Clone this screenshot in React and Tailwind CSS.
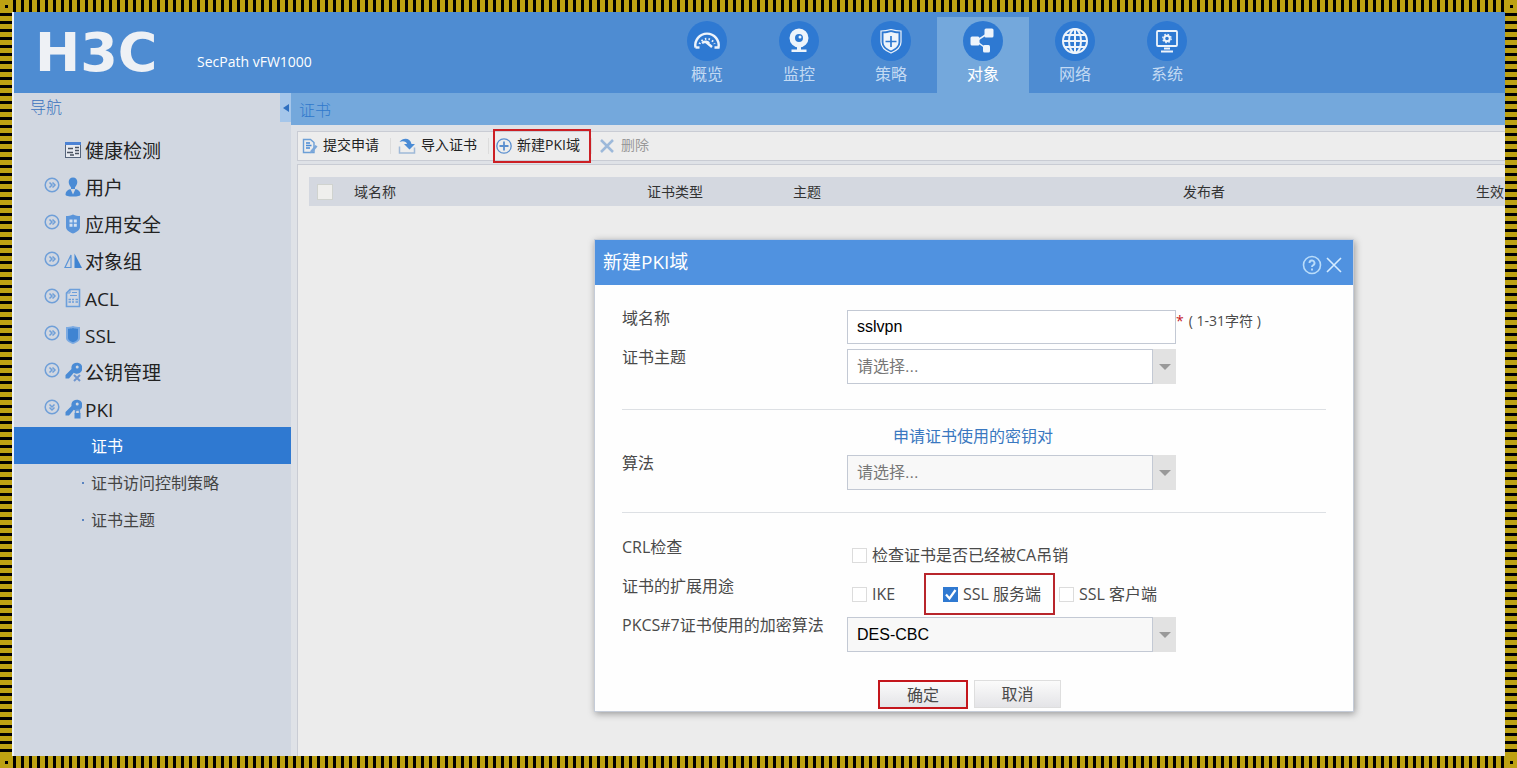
import { useState } from "react";

const GaugeIcon = () => (
  <svg viewBox="0 0 28 28" className="h-7 w-7" fill="none" stroke="#eef4fb">
    <path d="M2.500 20.500a11.700 11.700 0 1 1 23 0h-4" strokeWidth="2.400" />
    <path d="M2.500 20.500h4" strokeWidth="2.400" />
    <path d="M6.500 17a8 8 0 0 1 15 0" strokeWidth="2" strokeDasharray="1.500 2.200" />
    <path d="M9 16c3-2 6-1.500 7 .5M13 15l6 5" strokeWidth="2.400" />
  </svg>
);

const CameraIcon = () => (
  <svg viewBox="0 0 28 28" className="h-7 w-7" fill="#eef4fb">
    <path
      fillRule="evenodd"
      d="M14 1.500a9.500 9.500 0 1 0 0 19 9.500 9.500 0 0 0 0-19zm0 5.500a4 4 0 1 1 0 8 4 4 0 0 1 0-8z"
    />
    <circle cx="15" cy="10" r="1.500" />
    <path d="M12 19h4v3.500h5.500V25h-15v-2.500H12z" />
  </svg>
);

const PolicyIcon = () => (
  <svg viewBox="0 0 28 28" className="h-7 w-7" fill="none" stroke="#eef4fb">
    <path
      d="M14 2.500c3.500 1 6.500 1.500 10 1.500v11c0 5-4 8.500-10 11-6-2.500-10-6-10-11V4c3.500 0 6.500-.5 10-1.500z"
      strokeWidth="1.200"
    />
    <path
      d="M14 5c3 .8 5 1.200 7.500 1.300V15c0 3.800-3 6.500-7.500 8.500C9.500 21.500 6.500 18.800 6.500 15V6.300C9 6.200 11 5.800 14 5z"
      fill="#eef4fb"
      stroke="none"
    />
    <path d="M14 9v11M8.500 14.500h11" stroke="#2e79d2" strokeWidth="1.700" />
  </svg>
);

const ObjectIcon = () => (
  <svg viewBox="0 0 28 28" className="h-7 w-7" fill="#eef4fb">
    <path d="M18 7l-11 7 11 8" fill="none" stroke="#eef4fb" strokeWidth="1.500" />
    <rect x="15.500" y="1.500" width="9" height="9" rx="1.500" />
    <rect x="1.500" y="9.500" width="9" height="9" rx="1.500" />
    <rect x="14" y="18" width="7" height="7.500" rx="1.500" />
  </svg>
);

const GlobeIcon = () => (
  <svg viewBox="0 0 28 28" className="h-7 w-7" fill="none" stroke="#eef4fb" strokeWidth="2">
    <circle cx="14" cy="14" r="12" />
    <ellipse cx="14" cy="14" rx="6" ry="12" />
    <path d="M14 2v24M2 14h24M4 8h20M4 20h20" />
  </svg>
);

const SystemIcon = () => (
  <svg viewBox="0 0 28 28" className="h-7 w-7" fill="none" stroke="#eef4fb">
    <rect x="4" y="4" width="20" height="15" rx="1" strokeWidth="1.800" />
    <circle cx="14" cy="11.500" r="2.800" strokeWidth="2" />
    <circle cx="14" cy="11.500" r="4.200" strokeWidth="1.300" strokeDasharray="1.600 1.700" />
    <path d="M11 21.500h6M8 24.500h12" strokeWidth="2" />
  </svg>
);

const HealthIcon = () => (
  <svg viewBox="0 0 18 18" className="h-[18px] w-[18px]">
    <rect x="1.500" y="1.500" width="15" height="15" fill="#e7eaf0" stroke="#56657c" />
    <rect x="1" y="1" width="16" height="3" fill="#4c82d4" />
    <path d="M4 7.500h5M3 11.500h6M6 14h4M11 6.500h4M11 9.500h4M11 12.500h4" stroke="#48515f" strokeWidth="1.400" />
  </svg>
);

const UserIcon = () => (
  <svg viewBox="0 0 18 20" className="h-5 w-[18px]" fill="#4a8bd5">
    <path d="M9 .5c2.700 0 4.300 2 4.300 4.500 0 2.300-1.200 4-2.300 5.200V12H7v-1.800C5.900 9 4.700 7.300 4.700 5 4.700 2.500 6.300.5 9 .5z" />
    <path d="M6.500 12L9 17.500l2.500-5.500c3 .8 5 2.500 5 5.500 0 1.500-3 2-7.500 2s-7.500-.5-7.500-2c0-3 2-4.700 5-5.500z" />
  </svg>
);

const AppShieldIcon = () => (
  <svg viewBox="0 0 18 20" className="h-5 w-[18px]">
    <path d="M9 .5c2.500 1 4.500 1.500 7 1.500v11c0 3-3 5-7 6.500C5 18 2 16 2 13V2c2.500 0 4.500-.5 7-1.500z" fill="#5b95da" />
    <path d="M5.500 5.500h3v3h-3zM9.800 5.500h3v3h-3zM5.500 9.800h3v3h-3zM9.800 9.800h3v3h-3z" fill="#d5e2f2" />
  </svg>
);

const MirrorIcon = () => (
  <svg viewBox="0 0 18 18" className="h-[18px] w-[18px]">
    <path d="M7 3v12.500H1z" fill="none" stroke="#5b95d8" strokeWidth="1.200" />
    <path d="M10.500 1.500L18 16h-7.500z" fill="#3f84d2" />
  </svg>
);

const AclIcon = () => (
  <svg viewBox="0 0 18 20" className="h-5 w-[18px]" fill="none" stroke="#6c9fdb">
    <path d="M6 1.500h9.500v17h-13V5z" strokeWidth="1.600" />
    <path d="M6 1.500V5H2.500M8 4.500h5M6 7.500h7" />
    <path d="M4.500 11.500h2.500M8 11.500h2M11.500 11.500h2.500M4.500 14h2.500M8 14h2M11.500 14h2.500" strokeWidth="1.600" />
  </svg>
);

const SslIcon = () => (
  <svg viewBox="0 0 18 20" className="h-5 w-[18px]">
    <path d="M9 1c2.500.8 4.500 1 7 1v11c0 3-3 4.500-7 6-4-1.500-7-3-7-6V2c2.500 0 4.500-.2 7-1z" fill="#7baae2" />
    <path d="M9 3c2 .6 3.500.8 5 .8V13c0 2-2 3.300-5 4.300C6 16.300 4 15 4 13V3.800c1.500 0 3-.2 5-.8z" fill="#3f84d2" />
  </svg>
);

const KeyShape = () => (
  <path
    fillRule="evenodd"
    d="M11 1a5.500 5.500 0 1 1-1.200 9.700L5 16.500H1.500V13l6-6A5.500 5.500 0 0 1 11 1zm2.200 2.500a1.500 1.500 0 1 0 0 3 1.500 1.500 0 0 0 0-3z"
    fill="#4a8bd5"
  />
);

const KeyIcon = () => (
  <svg viewBox="0 0 18 20" className="h-5 w-[18px]">
    <KeyShape />
    <path d="M10 13l6 6M16 13l-6 6" stroke="#6f96cf" strokeWidth="2" />
  </svg>
);

const PkiIcon = () => (
  <svg viewBox="0 0 18 20" className="h-5 w-[18px]">
    <KeyShape />
    <path d="M11.500 14.500v-2a2 2 0 0 1 4 0v2" fill="none" stroke="#5b95d8" strokeWidth="1.400" />
    <rect x="10.500" y="14" width="6" height="5.500" fill="#4a8bd5" />
  </svg>
);

const ExpandIcon = ({ open }) => (
  <svg viewBox="0 0 16 16" className="h-4 w-4" fill="none" stroke="#6f9fd8">
    <circle cx="8" cy="8" r="6.800" strokeWidth="1.500" />
    {open ? (
      <path d="M5.500 5.500L8 8l2.500-2.500M5.500 8.500L8 11l2.500-2.500" strokeWidth="1.500" />
    ) : (
      <path d="M5.500 5.500L8 8l-2.500 2.500M8.500 5.500L11 8l-2.500 2.500" strokeWidth="1.500" />
    )}
  </svg>
);

const SubmitIcon = () => (
  <svg viewBox="0 0 16 16" className="h-4 w-4" fill="none">
    <path d="M1.500 1.500h7l3.500 3v10H1.500z" stroke="#6c9fd6" strokeWidth="1.400" />
    <path d="M4 5h4M4 7.500h5.500M4 10h4" stroke="#4a8bd5" strokeWidth="1.400" />
    <path d="M13.500 7l2 1.500-5 6-2.500.8.500-2.500z" fill="#7ba7da" />
  </svg>
);

const ImportIcon = () => (
  <svg viewBox="0 0 18 16" className="h-4 w-[18px]">
    <path d="M1.500 4C5-.5 12-.5 13.500 6H17l-5.500 5.500L6 6h3C8.500 3.500 5 2.500 1.500 4z" fill="#4a8bd5" />
    <path d="M1.500 8.500V15h15V9.500" fill="none" stroke="#9fb9d8" strokeWidth="1.500" />
  </svg>
);

const AddIcon = () => (
  <svg viewBox="0 0 16 16" className="h-4 w-4" fill="none" stroke="#5b8fcf">
    <circle cx="8" cy="8" r="7.200" strokeWidth="1.300" />
    <path d="M8 3.500v9M3.500 8h9" strokeWidth="1.800" />
  </svg>
);

const DeleteIcon = () => (
  <svg viewBox="0 0 16 16" className="h-4 w-4" fill="none" stroke="#9db9da" strokeWidth="2.500">
    <path d="M2 2l12 12M14 2L2 14" />
  </svg>
);

const menus = [
  { name: "概览", icon: GaugeIcon },
  { name: "监控", icon: CameraIcon },
  { name: "策略", icon: PolicyIcon },
  { name: "对象", icon: ObjectIcon, active: true },
  { name: "网络", icon: GlobeIcon },
  { name: "系统", icon: SystemIcon },
];

const navItems = [
  { name: "健康检测", icon: HealthIcon, leaf: true },
  { name: "用户", icon: UserIcon },
  { name: "应用安全", icon: AppShieldIcon },
  { name: "对象组", icon: MirrorIcon },
  { name: "ACL", icon: AclIcon },
  { name: "SSL", icon: SslIcon },
  { name: "公钥管理", icon: KeyIcon },
  { name: "PKI", icon: PkiIcon, open: true },
];

const pkiItems = ["证书", "证书访问控制策略", "证书主题"];

const Corner = () => (
  <div className="flex h-3 w-3 items-center justify-center">
    <span className="h-[3px] w-[3px] bg-black" />
  </div>
);

const StripeRow = () => (
  <div className="flex h-3 shrink-0 bg-[#bda112]">
    <Corner />
    <div className="flex-1 bg-[repeating-linear-gradient(90deg,#bda112_0px,#bda112_1px,#000_1px,#000_4px,#bda112_4px,#bda112_8px)]" />
    <Corner />
  </div>
);

const StripeColumn = () => (
  <div className="w-3 shrink-0 bg-[repeating-linear-gradient(180deg,#bda112_0px,#bda112_1px,#000_1px,#000_4px,#bda112_4px,#bda112_8px)]" />
);

const Header = () => (
  <header className="flex h-[81px] shrink-0 bg-[#4e8cd2] text-white">
    <div className="flex w-[647px] shrink-0 pl-[21px]">
      <span className="w-[162px] pt-[11px] font-['DejaVu_Sans'] text-[54px] leading-[60px] font-bold text-[#eef1f5]">
        H3C
      </span>
      <span className="pt-10 text-sm">SecPath vFW1000</span>
    </div>
    <nav className="flex pt-[5px]">
      {menus.map(({ name, icon: Icon, active }) => (
        <a
          key={name}
          href="#"
          className={`flex w-[92px] flex-col items-center pt-1 ${
            active ? "bg-[#74a8dc] text-white" : "text-[#c3daf3]"
          }`}
        >
          <span className="flex h-10 w-10 items-center justify-center rounded-full bg-[#2e79d2]">
            <Icon />
          </span>
          <span className="text-base leading-[26px]">{name}</span>
        </a>
      ))}
    </nav>
  </header>
);

const Sidebar = () => (
  <aside className="w-[277px] shrink-0 bg-[#d1d7e1]">
    <div className="flex h-[38px] justify-between">
      <h2 className="pt-0.5 pl-4 text-base font-light text-[#3a72bd]">导航</h2>
      <button
        type="button"
        aria-label="收起导航"
        className="flex h-[29px] w-[11px] items-center justify-center bg-[#a5c6ea]"
      >
        <svg viewBox="0 0 6 8" className="h-2 w-1.5" fill="#2e6fc0">
          <path d="M6 0v8L0 4z" />
        </svg>
      </button>
    </div>
    <ul>
      {navItems.map(({ name, icon: Icon, open, leaf }) => (
        <li key={name}>
          <a href="#" className="flex h-[37px] items-center pl-[30px] text-[#222]">
            <span className="w-5 pb-1">{!leaf && <ExpandIcon open={open} />}</span>
            <Icon />
            <span className="pt-0.5 pl-[3px] text-[19px] leading-8">{name}</span>
          </a>
        </li>
      ))}
    </ul>
    <ul>
      {pkiItems.map((name, index) => (
        <li key={name}>
          <a
            href="#"
            className={`flex h-[37px] items-center pl-[68px] text-base ${
              index === 0 ? "bg-[#2f79d1] text-white" : "text-[#444]"
            }`}
          >
            <span className="flex w-[9px]">
              {index > 0 && <i className="h-0.5 w-0.5 bg-[#5a84c0]" />}
            </span>
            {name}
          </a>
        </li>
      ))}
    </ul>
  </aside>
);

const Separator = () => <span className="mr-[7px] ml-[11px] h-4 w-px bg-[#dcdcdc]" />;

const Toolbar = ({ onCreate }) => (
  <div className="mt-1.5 ml-1.5 flex h-[30px] items-center border-y border-l border-[#c9ccd4] bg-[#ededed] pl-1 text-sm text-[#222]">
    <button type="button" className="flex items-center gap-[5px]">
      <SubmitIcon />
      <span className="pb-0.5">提交申请</span>
    </button>
    <Separator />
    <button type="button" className="flex items-center gap-[5px]">
      <ImportIcon />
      <span className="pb-0.5">导入证书</span>
    </button>
    <Separator />
    <button type="button" className="relative flex items-center gap-[5px]" onClick={onCreate}>
      <AddIcon />
      <span className="pb-0.5">新建PKI域</span>
      <span className="absolute -inset-y-1.5 -right-[11px] -left-[3px] border-2 border-[#cc1f24]" />
    </button>
    <Separator />
    <button type="button" className="flex items-center gap-1.5 text-[#999]">
      <DeleteIcon />
      <span className="pb-0.5">删除</span>
    </button>
  </div>
);

const CertTable = () => (
  <div className="mt-[3px] ml-1.5 flex-1 overflow-hidden border-t border-l border-[#c9ccd4] bg-[#ececec] pt-3 pl-[11px]">
    <table className="w-[1320px] table-fixed text-left text-sm text-[#333]">
      <thead>
        <tr className="h-[29px] bg-[#d4d8e0]">
          <th className="w-[45px] pl-2">
            <input
              type="checkbox"
              aria-label="全选"
              className="block h-4 w-4 appearance-none border border-[#d0d3cf] bg-[#efefed]"
            />
          </th>
          <th className="w-[293px] font-normal">域名称</th>
          <th className="w-[146px] font-normal">证书类型</th>
          <th className="w-[390px] font-normal">主题</th>
          <th className="w-[293px] font-normal">发布者</th>
          <th className="font-normal">生效日期</th>
        </tr>
      </thead>
    </table>
  </div>
);

const Row = ({ label, htmlFor, children }) => (
  <div className="flex min-h-[39px]">
    <label htmlFor={htmlFor} className="w-[225px] shrink-0 leading-6">
      {label}
    </label>
    {children}
  </div>
);

const Select = ({ id, options, className }) => (
  <div className="relative mt-1 h-[35px] w-[329px]">
    <select
      id={id}
      className={`h-full w-full appearance-none border border-[#c3c9d4] pl-[9px] font-['Liberation_Sans','Noto_Sans_CJK_SC',sans-serif] ${className}`}
    >
      {options.map((option) => (
        <option key={option}>{option}</option>
      ))}
    </select>
    <span className="pointer-events-none absolute inset-y-0 right-0 flex w-6 items-center justify-center border-l border-[#c3c9d4] bg-[#e2e2e2]">
      <svg viewBox="0 0 12 6" className="h-1.5 w-3" fill="#999">
        <path d="M0 0h12L6 6z" />
      </svg>
    </span>
  </div>
);

const Check = ({ label, className = "", marked, ...rest }) => (
  <label className={`relative flex h-6 items-center gap-[5px] whitespace-nowrap ${className}`}>
    <input
      type="checkbox"
      className="peer h-[15px] w-[15px] appearance-none border border-[#dcdcdc] bg-white checked:border-[#2f79d1] checked:bg-[#2f79d1]"
      {...rest}
    />
    <svg
      viewBox="0 0 15 15"
      className="pointer-events-none absolute left-0 hidden h-[15px] w-[15px] peer-checked:block"
      fill="none"
      stroke="#fff"
      strokeWidth="2.200"
    >
      <path d="M3 7.500l3.500 4L12.500 3" />
    </svg>
    {label}
    {marked && (
      <span className="absolute -inset-y-[9px] right-1 -left-[19px] border-2 border-[#b8252b]" />
    )}
  </label>
);

const PkiDialog = ({ onClose }) => {
  const [domain, setDomain] = useState("sslvpn");

  return (
    <div
      role="dialog"
      aria-label="新建PKI域"
      className="absolute top-[146px] left-[303px] w-[760px] border border-[#c5ccd8] bg-[#fefefe] text-base text-[#4a4a4a] shadow-[1px_2px_7px_rgba(0,0,0,0.35)]"
    >
      <div className="flex h-[45px] items-center justify-between bg-[#5092e0] pr-[9px] pl-2 text-white">
        <h2 className="pb-0.5 text-[19px] leading-10">新建PKI域</h2>
        <div className="flex gap-0.5 pt-1">
          <button type="button" aria-label="帮助">
            <svg viewBox="0 0 20 20" className="h-5 w-5" fill="none" stroke="#b9dcfa">
              <circle cx="10" cy="10" r="8.500" strokeWidth="1.600" />
              <path d="M7.500 8a2.500 2.500 0 1 1 3.500 2.300c-.8.400-1 .8-1 1.700M10 13.500v2" strokeWidth="1.900" />
            </svg>
          </button>
          <button type="button" aria-label="关闭" onClick={onClose}>
            <svg viewBox="0 0 20 20" className="h-5 w-5" fill="none" stroke="#d5ebff" strokeWidth="1.600">
              <path d="M3 3l14 14M17 3L3 17" />
            </svg>
          </button>
        </div>
      </div>
      <form className="px-[27px] pt-[21px] pb-0.5" onSubmit={(e) => e.preventDefault()}>
        <Row label="域名称" htmlFor="domain">
          <input
            id="domain"
            type="text"
            value={domain}
            onChange={(e) => setDomain(e.target.value)}
            className="mt-1 h-[34px] w-[329px] border border-[#c3c9d4] bg-white pl-[9px] font-['Liberation_Sans'] text-black"
          />
          <span className="pt-[5px] text-sm text-[#c5161d]">*</span>
          <span className="pt-[5px] pl-[5px] text-sm">( 1-31字符 )</span>
        </Row>
        <Row label="证书主题" htmlFor="subject">
          <Select id="subject" options={["请选择..."]} className="bg-white text-[#777]" />
        </Row>
        <hr className="mt-[25px] border-[#dde0e4]" />
        <p className="mt-[14px] pl-[271px] leading-6 text-[#3a78c0]">申请证书使用的密钥对</p>
        <div className="mt-[3px]">
          <Row label="算法" htmlFor="algorithm">
            <Select id="algorithm" options={["请选择..."]} className="bg-[#f8f8f8] text-[#777]" />
          </Row>
        </div>
        <hr className="mt-[22px] mb-[22px] border-[#dde0e4]" />
        <Row label="CRL检查" htmlFor="crl">
          <Check id="crl" label="检查证书是否已经被CA吊销" className="mt-2 ml-[5px]" />
        </Row>
        <Row label="证书的扩展用途" htmlFor="ike">
          <div className="mt-2 ml-[5px] flex">
            <Check id="ike" label="IKE" className="w-[91px]" />
            <Check label="SSL 服务端" className="w-[116px]" defaultChecked marked />
            <Check label="SSL 客户端" />
          </div>
        </Row>
        <Row label="PKCS#7证书使用的加密算法" htmlFor="pkcs7">
          <Select id="pkcs7" options={["DES-CBC"]} className="bg-[#f8f8f8] text-black" />
        </Row>
        <div className="mt-7 flex gap-1.5 pl-64">
          <button
            type="submit"
            className="h-[29px] w-[90px] border-2 border-[#c4161c] bg-linear-to-b from-[#fbfbfb] to-[#e4e4e7] leading-6"
          >
            确定
          </button>
          <button
            type="button"
            className="h-7 w-[87px] border border-[#dedede] bg-linear-to-b from-[#fbfbfb] to-[#e4e4e7] leading-6"
            onClick={onClose}
          >
            取消
          </button>
        </div>
      </form>
    </div>
  );
};

const App = () => {
  const [showDialog, setShowDialog] = useState(true);

  return (
    <div className="flex h-screen flex-col overflow-hidden font-['Open_Sans','Noto_Sans_CJK_SC',sans-serif]">
      <StripeRow />
      <div className="flex min-h-0 flex-1">
        <StripeColumn />
        <div className="flex min-w-0 flex-1 flex-col border-l-2 border-[#eef2f7]">
          <Header />
          <div className="flex min-h-0 flex-1">
            <Sidebar />
            <main className="relative flex min-w-0 flex-1 flex-col bg-[#dfe2e7]">
              <h1 className="h-8 bg-[#74a8dc] pl-2 text-base leading-[34px] font-light text-[#2f78cc]">
                证书
              </h1>
              <Toolbar onCreate={() => setShowDialog(true)} />
              <CertTable />
              {showDialog && <PkiDialog onClose={() => setShowDialog(false)} />}
            </main>
          </div>
        </div>
        <StripeColumn />
      </div>
      <StripeRow />
    </div>
  );
};

export default App;
